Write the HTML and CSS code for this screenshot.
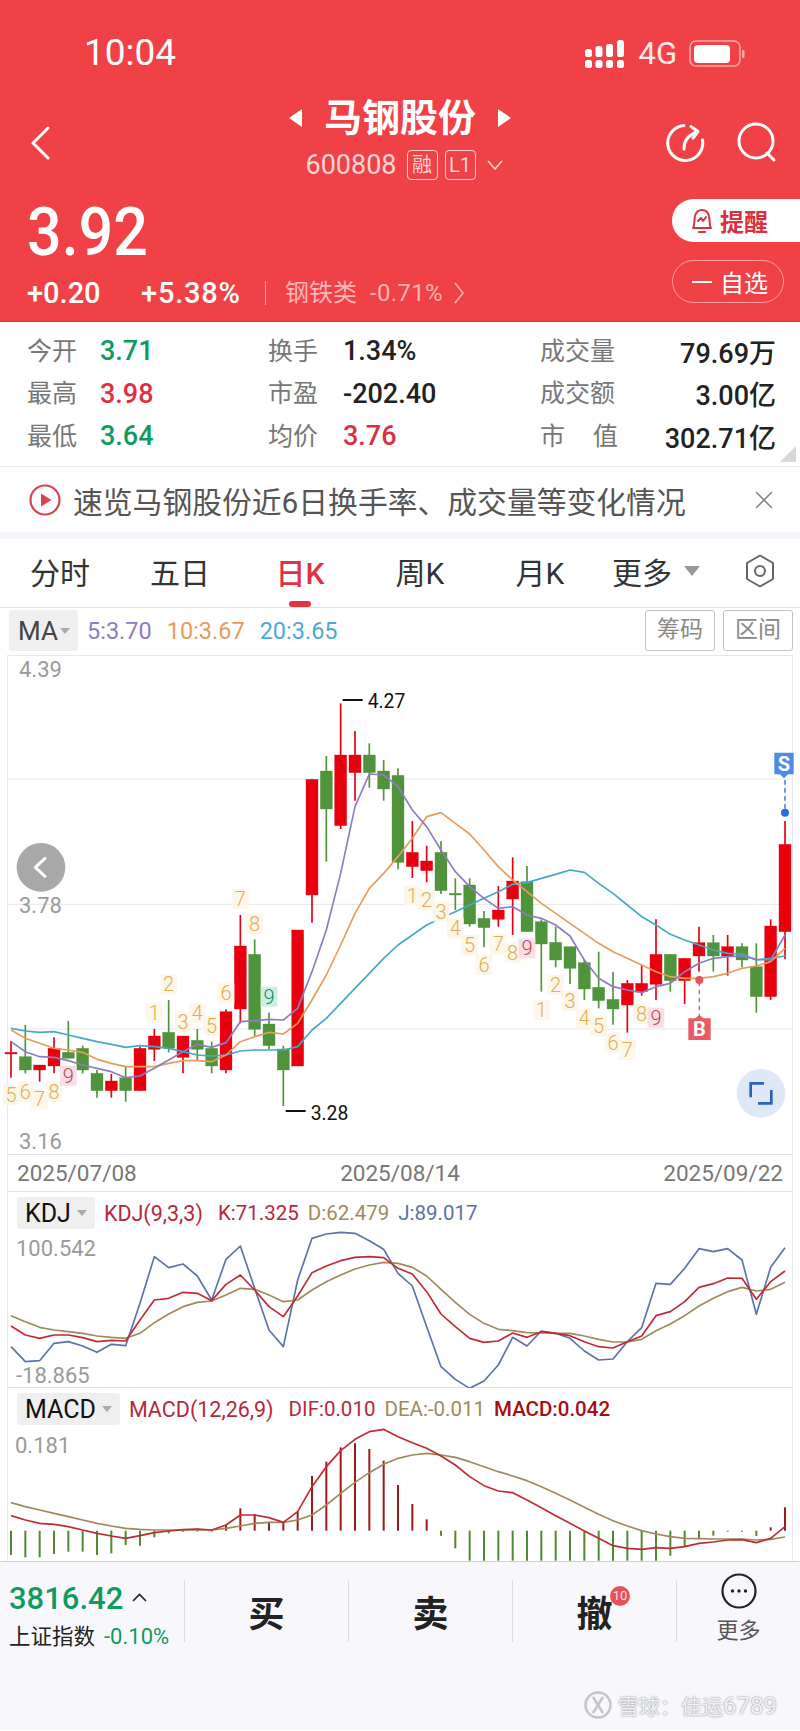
FILE: index.html
```
<!DOCTYPE html>
<html lang="zh-CN">
<head>
    <meta charset="UTF-8">
    <meta name="viewport" content="width=device-width, initial-scale=1.0">
    <title>马钢股份 600808</title>
    <link rel="stylesheet" href="styles.css">
</head>
<body>
    <!-- Red quote header -->
    <header class="header">
        <div class="status-bar">
            <span class="time">10:04</span>
            <div class="status-icons">
                <svg class="signal" width="40" height="29" viewBox="0 0 40 29">
                    <rect x="0" y="9" width="7" height="8" rx="2.5"/><rect x="10.500" y="6" width="7" height="11" rx="2.500"/><rect x="21" y="4" width="7" height="13" rx="2.500"/><rect x="32" y="0" width="7" height="17" rx="2.500"/>
                    <rect x="0" y="20" width="7" height="8" rx="2.500"/><rect x="10.500" y="20" width="7" height="8" rx="2.500"/><rect x="21" y="20" width="7" height="8" rx="2.500"/><rect x="32" y="20" width="7" height="8" rx="2.500"/>
                </svg>
                <span class="net">4G</span>
                <svg class="battery" width="56" height="28" viewBox="0 0 56 28">
                    <rect x="1" y="1" width="50" height="25" rx="6" fill="none" stroke="#f9a9ab" stroke-width="1.5"/>
                    <rect x="5" y="5" width="36" height="18" rx="4" fill="#fff"/>
                    <rect x="53" y="10" width="2.500" height="8" rx="1" fill="#f9a9ab"/>
                </svg>
            </div>
        </div>

        <nav class="nav">
            <svg class="back" width="20" height="34" viewBox="0 0 20 34"><path d="M18 2 L3 17 L18 32" fill="none" stroke="#fff" stroke-width="3" stroke-linecap="round" stroke-linejoin="round"/></svg>
            <div class="stock-title">
                <div class="stock-name">
                    <span class="tri-left"></span>
                    <h1>马钢股份</h1>
                    <span class="tri-right"></span>
                </div>
                <div class="stock-code">
                    <span class="code-num">600808</span>
                    <span class="code-tag">融</span>
                    <span class="code-tag">L1</span>
                    <svg width="16" height="11" viewBox="0 0 16 11"><path d="M1 1 L8 9 L15 1" fill="none" stroke="#fbd5d5" stroke-width="1.800"/></svg>
                </div>
            </div>
            <div class="nav-icons">
                <svg width="40" height="40" viewBox="0 0 40 40" fill="none" stroke="#fff" stroke-width="3" stroke-linecap="round" stroke-linejoin="round">
                    <path d="M19 2.500 A 17.500 17.500 0 1 0 37.500 17"/>
                    <path d="M19 26 C19 18 23 12 32 9"/>
                    <path d="M26 3.500 L33 8.500 L28 15"/>
                </svg>
                <svg width="42" height="42" viewBox="0 0 42 42" fill="none" stroke="#fff" stroke-width="3" stroke-linecap="round">
                    <circle cx="19" cy="19" r="17"/>
                    <path d="M30 31 L37 38"/>
                </svg>
            </div>
        </nav>

        <div class="quote">
            <div class="quote-left">
                <div class="price">3.92</div>
                <div class="change">
                    <span class="change-abs">+0.20</span>
                    <span class="change-pct">+5.38%</span>
                    <span class="sector">钢铁类<em>-0.71%</em></span>
                    <svg width="12" height="22" viewBox="0 0 12 22"><path d="M2 1 L10 11 L2 21" fill="none" stroke="#f9b5b7" stroke-width="1.500"/></svg>
                </div>
            </div>
            <div class="quote-actions">
                <div class="btn-remind">
                    <svg width="24" height="28" viewBox="0 0 24 28" fill="none" stroke="#d9303c" stroke-width="2" stroke-linejoin="round" stroke-linecap="round">
                        <path d="M3 21 C5 18 4 12 5 9 C6 5 9 3 12 3 C15 3 18 5 19 9 C20 12 19 18 21 21 Z"/>
                        <path d="M9 25 H15"/>
                        <path d="M8 14 L11 11 L13 14 L16 10"/>
                    </svg>
                    <span>提醒</span>
                </div>
                <div class="btn-watch"><i></i><span>自选</span></div>
            </div>
        </div>
    </header>

    <!-- Stat grid -->
    <section class="stats">
        <div class="stat col-a"><span class="lbl">今开</span><span class="val green">3.71</span></div>
        <div class="stat col-b"><span class="lbl">换手</span><span class="val">1.34%</span></div>
        <div class="stat col-c"><span class="lbl">成交量</span><span class="val">79.69万</span></div>
        <div class="stat col-a"><span class="lbl">最高</span><span class="val red">3.98</span></div>
        <div class="stat col-b"><span class="lbl">市盈</span><span class="val">-202.40</span></div>
        <div class="stat col-c"><span class="lbl">成交额</span><span class="val">3.00亿</span></div>
        <div class="stat col-a"><span class="lbl">最低</span><span class="val green">3.64</span></div>
        <div class="stat col-b"><span class="lbl">均价</span><span class="val red">3.76</span></div>
        <div class="stat col-c"><span class="lbl lbl-wide">市 值</span><span class="val">302.71亿</span></div>
        <span class="stats-corner"></span>
    </section>

    <section class="banner">
        <svg width="32" height="32" viewBox="0 0 32 32">
            <circle cx="16" cy="16" r="14.500" fill="none" stroke="#d9434d" stroke-width="2.200"/>
            <path d="M12 9.500 L22.500 16 L12 22.500 Z" fill="#d9434d"/>
        </svg>
        <p>速览马钢股份近6日换手率、成交量等变化情况</p>
        <svg class="banner-close" width="20" height="20" viewBox="0 0 20 20"><path d="M2 2 L18 18 M18 2 L2 18" stroke="#8a8a8a" stroke-width="1.600"/></svg>
    </section>

    <!-- Period tabs -->
    <div class="tabs">
        <span class="tab">分时</span>
        <span class="tab">五日</span>
        <span class="tab active">日K</span>
        <span class="tab">周K</span>
        <span class="tab">月K</span>
        <span class="tab tab-more">更多<i class="caret caret-big"></i></span>
        <span class="tab">
            <svg width="30" height="34" viewBox="0 0 30 34" fill="none" stroke="#666" stroke-width="2"><path d="M15 1.500 L28 9 V25 L15 32.500 L2 25 V9 Z" stroke-linejoin="round"/><circle cx="15" cy="17" r="5"/></svg>
        </span>
    </div>

    <div class="ma-row">
        <span class="chip chip-ma">MA<i class="caret"></i></span>
        <span class="ma-val ma5">5:3.70</span>
        <span class="ma-val ma10">10:3.67</span>
        <span class="ma-val ma20">20:3.65</span>
        <span class="ma-btn">筹码</span>
        <span class="ma-btn">区间</span>
    </div>

    <!-- Charts, drawn by chart.js -->
    <div class="charts">
        <div class="price-pane">
            <svg id="klineChart" viewBox="24 18 2352 1494" width="784" height="498"></svg>
        </div>
        <div class="date-row">
            <span>2025/07/08</span>
            <span>2025/08/14</span>
            <span>2025/09/22</span>
        </div>
        <div class="sub-pane kdj-pane">
            <svg id="kdjChart" class="sub-svg" viewBox="24 66 2352 588" width="784" height="196"></svg>
            <div class="legend">
                <span class="chip chip-sub">KDJ<i class="caret"></i></span>
                <span class="legend-title c-red">KDJ(9,3,3)</span>
                <span class="c-red">K:71.325</span>
                <span class="c-brown">D:62.479</span>
                <span class="c-blue">J:89.017</span>
            </div>
            <span class="axis axis-kdj-top">100.542</span>
            <span class="axis axis-kdj-low">-18.865</span>
        </div>
        <div class="sub-pane macd-pane">
            <svg id="macdChart" class="sub-svg" viewBox="24 654 2352 519" width="784" height="173"></svg>
            <div class="legend">
                <span class="chip chip-sub">MACD<i class="caret"></i></span>
                <span class="legend-title c-red">MACD(12,26,9)</span>
                <span class="c-red">DIF:0.010</span>
                <span class="c-brown">DEA:-0.011</span>
                <span class="c-dark">MACD:0.042</span>
            </div>
            <span class="axis axis-macd-top">0.181</span>
        </div>
    </div>

    <!-- Bottom actions -->
    <footer class="footer">
        <div class="actions">
            <div class="index-box">
                <div class="index-value">3816.42<svg width="15" height="9" viewBox="0 0 15 9"><path d="M1 8 L7.500 1.500 L14 8" fill="none" stroke="#222" stroke-width="1.600"/></svg></div>
                <div class="index-name">上证指数<span>-0.10%</span></div>
            </div>
            <div class="act">买</div>
            <div class="act">卖</div>
            <div class="act">撤<b class="act-badge">10</b></div>
            <div class="act-more">
                <svg width="36" height="36" viewBox="0 0 36 36"><circle cx="18" cy="18" r="16.500" fill="none" stroke="#222" stroke-width="2.200"/><circle cx="11.500" cy="18" r="1.700" fill="#222"/><circle cx="18" cy="18" r="1.700" fill="#222"/><circle cx="24.500" cy="18" r="1.700" fill="#222"/></svg>
                <span>更多</span>
            </div>
        </div>
        <div class="watermark">
            <svg width="30" height="30" viewBox="0 0 30 30" fill="none" stroke="#c4c4ca" stroke-width="2.500"><circle cx="15" cy="15" r="12.500"/><path d="M10 7 L20 23 M20 7 L10 23"/></svg>
            <span class="wm-name">雪球：</span>
            <span class="wm-name">佳运<b>6789</b></span>
        </div>
    </footer>

    <script src="chart.js"></script>
</body>
</html>
```

FILE: styles.css
```
* { box-sizing: border-box; }
body {
    margin: 0;
    width: 800px;
    height: 1731px;
    overflow: hidden;
    background-color: #fff;
    color: #222;
    font-family: Roboto, "Noto Sans CJK SC", sans-serif;
}
h1, p { margin: 0; }
i, em { font-style: normal; }

/* header */
.header {
    height: 322px;
    background-color: #f04146;
    border-bottom: 1px solid #d23c40;
    color: #fff;
}
.status-bar {
    height: 92px;
    padding: 14px 55px 0 84px;
    display: flex;
    justify-content: space-between;
    align-items: center;
}
.time { font-size: 37px; line-height: 40px; }
.status-icons { display: flex; align-items: center; margin-top: 2px; }
.signal { fill: #fff; }
.net { font-size: 31px; line-height: 34px; margin: 0 12px 0 13px; color: #fde9e9; }

.nav {
    display: grid;
    grid-template-columns: 1fr auto 1fr;
    align-items: center;
    padding: 5px 30px 0 30px;
    height: 89px;
}
.back { margin-top: 8px; }
.stock-title { display: flex; flex-direction: column; align-items: center; }
.stock-name { display: flex; align-items: center; height: 40px; gap: 22px; }
.stock-name h1 { font-size: 38px; line-height: 40px; font-weight: 700; }
.tri-left, .tri-right { width: 0; height: 0; border-top: 9px solid transparent; border-bottom: 9px solid transparent; }
.tri-left { border-right: 13px solid #fff; }
.tri-right { border-left: 13px solid #fff; }
.stock-code {
    display: flex;
    align-items: center;
    height: 30px;
    margin-top: 12px;
    margin-left: 8px;
    gap: 7px;
    font-size: 27px;
    color: #fbd5d5;
}
.code-num { margin-right: 3px; }
.stock-code svg { margin-left: 4px; }
.code-tag {
    width: 31px;
    height: 30px;
    border: 1px solid #fbd5d5;
    border-radius: 4px;
    font-size: 20px;
    line-height: 28px;
    text-align: center;
}
.nav-icons { justify-self: end; display: flex; gap: 32px; align-items: center; margin: 8px -9px 0 0; }

.quote { display: flex; justify-content: space-between; padding: 18px 0 0 27px; }
.price {
    font-size: 61px;
    line-height: 66px;
    font-weight: 500;
    transform: scaleY(1.1);
    transform-origin: left center;
}
.change { display: flex; align-items: center; height: 30px; margin-top: 13px; }
.change-abs { font-size: 29px; font-weight: 500; width: 114px; }
.change-pct { font-size: 29px; font-weight: 500; width: 124px; letter-spacing: 0.8px; }
.sector {
    border-left: 1px solid #f8a0a3;
    padding-left: 19px;
    font-size: 24px;
    line-height: 24px;
    color: #f9b5b7;
    margin-right: 10px;
}
.sector em { margin-left: 13px; letter-spacing: 0.3px; }
.quote-actions { display: flex; flex-direction: column; align-items: flex-start; gap: 18px; width: 128px; }
.btn-remind {
    width: 128px;
    height: 43px;
    padding-left: 18px;
    display: flex;
    align-items: center;
    gap: 6px;
    background-color: #fff;
    border-radius: 22px 0 0 22px;
    color: #d9303c;
    font-size: 24px;
    font-weight: 700;
}
.btn-watch {
    width: 112px;
    height: 43px;
    display: flex;
    align-items: center;
    padding-left: 19px;
    gap: 8px;
    border: 1.5px solid #f8a0a3;
    border-radius: 22px;
    font-size: 24px;
}
.btn-watch i { width: 20px; height: 2px; background-color: #fff; }

/* stats */
.stats {
    position: relative;
    height: 145px;
    padding: 7px 24px 0 27px;
    display: grid;
    grid-template-columns: 241px 272px 1fr;
    grid-auto-rows: 42.5px;
    border-bottom: 1.5px solid #e9e9ec;
}
.stat { display: flex; align-items: center; }
.lbl { font-size: 25px; color: #777; margin-top: -3px; }
.val { font-size: 27px; font-weight: 500; margin-top: 2px; }
.col-a .lbl { width: 73px; }
.col-b .lbl { width: 75px; }
.col-c { justify-content: space-between; }
.lbl-wide { width: 78px; text-align: justify; text-align-last: justify; }
.green { color: #0e9a61; }
.red { color: #dd2f3f; }
.stats-corner {
    position: absolute;
    right: 4px;
    bottom: 4px;
    width: 0;
    height: 0;
    border-left: 16px solid transparent;
    border-bottom: 16px solid #d8d8d8;
}

/* banner */
.banner {
    height: 65px;
    padding: 0 26px 0 29px;
    display: flex;
    align-items: center;
    border-bottom: 7px solid #f5f6f9;
    box-sizing: content-box;
}
.banner p { font-size: 29.8px; color: #555; margin-left: 12px; white-space: nowrap; }
.banner-close { margin-left: auto; }

/* tabs */
.tabs {
    height: 69px;
    display: grid;
    grid-template-columns: repeat(6, 120px) 80px;
    align-items: center;
    border-bottom: 1.5px solid #e3e3e3;
}
.tab {
    position: relative;
    height: 100%;
    padding-bottom: 4px;
    display: flex;
    align-items: center;
    justify-content: center;
    font-size: 30px;
    color: #333;
}
.tab.active { color: #e0333f; font-weight: 500; }
.tab.active::after {
    content: "";
    position: absolute;
    bottom: 0;
    left: 49px;
    width: 22px;
    height: 6px;
    border-radius: 3px;
    background-color: #e0333f;
}
.tab-more { margin-left: -8px; }
.caret {
    display: inline-block;
    width: 0;
    height: 0;
    border-left: 5px solid transparent;
    border-right: 5px solid transparent;
    border-top: 6px solid #aaa;
}
.caret-big {
    margin-left: 12px;
    border-left-width: 8px;
    border-right-width: 8px;
    border-top: 10px solid #999;
}

/* ma row */
.ma-row {
    height: 47px;
    padding: 2px 7px 0 9px;
    display: flex;
    align-items: flex-start;
}
.chip {
    display: flex;
    align-items: center;
    background-color: #efefef;
    border-radius: 3px;
    color: #222;
}
.chip-ma { width: 69px; height: 41px; padding-left: 9px; font-size: 26px; color: #444; gap: 2px; }
.ma-val { font-size: 23.5px; line-height: 43px; }
.ma5 { margin-left: 9px; color: #8e7cc3; }
.ma10 { margin-left: 15px; color: #e89c5c; }
.ma20 { margin-left: 15px; color: #4fa8d8; margin-right: auto; }
.ma-btn {
    width: 70px;
    height: 41px;
    margin-left: 8px;
    border: 1.5px solid #c4c4c4;
    border-radius: 3px;
    font-size: 23px;
    line-height: 38px;
    text-align: center;
    color: #888;
}

/* charts */
.charts {
    margin: 0 7px;
    width: 786px;
    border-left: 1px solid #e8e8e8;
    border-right: 1px solid #e8e8e8;
}
.price-pane { height: 499px; border-top: 1px solid #e8e8e8; }
.price-pane svg { display: block; overflow: visible; }
.date-row {
    height: 38px;
    padding: 0 9px 0 9px;
    display: flex;
    justify-content: space-between;
    align-items: center;
    border-top: 1.5px solid #e3e3e3;
    border-bottom: 1.5px solid #e3e3e3;
    font-size: 22.5px;
    color: #777;
}
.sub-pane { position: relative; }
.kdj-pane { height: 196px; border-bottom: 1.5px solid #e3e3e3; }
.macd-pane { height: 173px; }
.sub-svg { position: absolute; left: 0; top: 0; display: block; }
.legend {
    position: relative;
    display: flex;
    align-items: center;
    gap: 9px;
    padding: 5px 0 0 9px;
    font-size: 20.5px;
}
.legend-title { font-size: 21.5px; margin-right: 6px; }
.chip-sub { height: 32px; padding: 0 8px; font-size: 25px; gap: 6px; color: #111; }
.c-red { color: #b5283a; }
.c-brown { color: #a08a5c; }
.c-blue { color: #5d70a8; }
.c-dark { color: #a80c14; font-weight: 500; }
.axis { position: absolute; left: 8px; font-size: 22px; line-height: 26px; color: #9a9a9a; }
.axis-kdj-top { top: 44px; }
.axis-kdj-low { top: 171px; }
.axis-macd-top { top: 45px; left: 7px; }

/* svg parts, units are 1/3 px */
.grid-line { stroke: #e6e6e6; stroke-width: 3; }
.wick { stroke-width: 5; }
.up { fill: #e8000f; stroke: #e8000f; }
.down { fill: #4f943a; stroke: #4f943a; }
.line { fill: none; stroke-width: 5; stroke-linejoin: round; }
.ma5-line { stroke: #8e7cc3; }
.ma10-line { stroke: #e89c5c; }
.ma20-line { stroke: #42a9c9; }
.k-line { stroke: #c22a33; }
.d-line { stroke: #a08a5c; }
.j-line { stroke: #5a72ae; }
.bar-up { stroke: #9c1a1a; stroke-width: 6; }
.bar-down { stroke: #4f8a2f; stroke-width: 6; }
.price-label { font-size: 66px; fill: #9a9a9a; font-family: Roboto, sans-serif; }
.extreme-label { font-size: 58px; fill: #111; font-family: Roboto, sans-serif; }
.extreme-tick { stroke: #111; stroke-width: 6; }
.td-box-plain { fill: #fdf6ea; }
.td-box-sell { fill: #fbdfe2; }
.td-box-buy { fill: #cfeee0; }
.td-num { font-size: 60px; font-weight: 300; text-anchor: middle; dominant-baseline: central; font-family: Roboto, sans-serif; }
.td-plain { fill: #e7ac4f; }
.td-sell { fill: #bd3f56; }
.td-buy { fill: #0a8f5c; }
.pin-s { fill: #4d8be8; }
.pin-b { fill: #ec5865; }
.pin-text { font-size: 60px; font-weight: 700; fill: #fff; text-anchor: middle; dominant-baseline: central; font-family: Roboto, sans-serif; }
.pin-stem { stroke-width: 4; stroke-dasharray: 14 10; }
.round-btn-left { fill: #a8a8a8; }
.round-btn-expand { fill: #dfe8f6; }

/* footer */
.footer {
    position: relative;
    height: 169px;
    background-color: #f8f8fc;
    border-top: 1.5px solid #cfcfcf;
    padding-top: 18px;
}
.actions {
    display: grid;
    grid-template-columns: 185px 164px 164px 164px 123px;
    height: 62px;
}
.act, .act-more, .index-box { height: 62px; }
.act, .index-box { border-right: 1px solid #dcdcdc; }
.index-box { padding-left: 9px; white-space: nowrap; }
.index-value {
    margin-top: 2px;
    font-size: 31px;
    line-height: 34px;
    font-weight: 500;
    color: #0e9a61;
    display: flex;
    align-items: center;
}
.index-value svg { margin-left: 9px; margin-top: -4px; }
.index-name { margin-top: 6px; font-size: 21.5px; line-height: 30px; color: #222; }
.index-name span { margin-left: 9px; color: #0e9a61; font-size: 22px; }
.act {
    position: relative;
    display: flex;
    align-items: center;
    justify-content: center;
    font-size: 36px;
    font-weight: 700;
}
.act-badge {
    position: absolute;
    left: 97px;
    top: 6px;
    width: 20px;
    height: 20px;
    border-radius: 50%;
    background-color: #e8505b;
    color: #fde3e3;
    font-size: 13px;
    font-weight: 400;
    line-height: 20px;
    text-align: center;
}
.act-more { display: flex; flex-direction: column; align-items: center; margin-top: -7px; color: #555; font-size: 22px; }
.act-more svg { flex: none; }
.act-more span { margin-top: 7px; line-height: 30px; }
.watermark {
    position: absolute;
    right: 23px;
    bottom: 10px;
    display: flex;
    align-items: center;
    font-size: 21px;
    color: #f1f1f4;
    text-shadow: 0 0 2px #77777d;
}
.watermark svg { margin-right: 5px; }
.wm-name b { font-size: 24px; font-weight: 400; }
```

FILE: chart.js
```
// all coordinates are in 1/3 px, the viewBox of each svg scales them down
const step = 43;
const x0 = 33;
const xAt = i => x0 + i * step;

// [up?, wickTop, bodyTop, bodyBottom, wickBottom]
const candles = [
    [1, 1173, 1207, 1212, 1283], [0, 1125, 1220, 1260, 1270], [1, 1245, 1245, 1260, 1295], [1, 1162, 1195, 1248, 1270],
    [0, 1113, 1207, 1225, 1225], [0, 1187, 1195, 1260, 1270], [0, 1260, 1270, 1322, 1343], [1, 1272, 1293, 1322, 1343],
    [0, 1250, 1283, 1322, 1355], [1, 1190, 1195, 1322, 1322], [1, 1137, 1158, 1198, 1233], [0, 1050, 1147, 1195, 1207],
    [1, 1158, 1158, 1222, 1270], [0, 1137, 1171, 1198, 1230], [0, 1175, 1195, 1248, 1270], [1, 1078, 1085, 1260, 1270],
    [1, 795, 888, 1077, 1120], [0, 868, 913, 1138, 1158], [0, 1088, 1122, 1187, 1197], [0, 1187, 1197, 1260, 1368],
    [1, 840, 840, 1248, 1248], [1, 388, 388, 735, 818], [0, 318, 363, 477, 635], [1, 160, 315, 527, 537],
    [1, 243, 315, 368, 452], [0, 280, 315, 368, 413], [0, 330, 363, 417, 452], [0, 355, 376, 637, 658],
    [1, 513, 607, 650, 684], [1, 587, 633, 662, 697], [0, 574, 607, 722, 732], [0, 685, 730, 735, 780],
    [0, 685, 705, 822, 830], [0, 783, 805, 833, 892], [1, 708, 780, 808, 830], [1, 622, 693, 747, 855],
    [0, 648, 695, 845, 845], [0, 808, 815, 882, 1025], [0, 830, 877, 930, 952], [0, 890, 890, 955, 1002],
    [0, 930, 938, 1017, 1050], [0, 905, 1012, 1052, 1075], [0, 966, 1048, 1077, 1124], [1, 990, 1000, 1065, 1148],
    [1, 945, 1000, 1025, 1037], [1, 808, 913, 1003, 1050], [0, 913, 913, 992, 1025], [1, 925, 925, 992, 1062],
    [1, 830, 878, 918, 965], [0, 855, 878, 918, 965], [1, 855, 890, 918, 977], [0, 880, 890, 930, 952],
    [0, 880, 950, 1040, 1088], [1, 808, 828, 1040, 1050], [1, 513, 583, 845, 928]
];

const ma5 = [1175, 1205, 1220, 1222, 1232, 1245, 1255, 1265, 1283, 1278, 1255, 1230, 1205, 1183, 1192, 1178, 1115, 1112, 1108, 1110, 1075, 965, 840, 670, 470, 372, 375, 410,
    480, 530, 600, 665, 710, 745, 775, 770, 795, 805, 825, 858, 930, 985, 1010, 1020, 1028, 1010, 1000, 965, 940, 925, 920, 918, 928, 930, 855];
const ma10 = [1140, 1165, 1180, 1195, 1200, 1207, 1228, 1240, 1250, 1250, 1250, 1240, 1232, 1232, 1235, 1215, 1175, 1160, 1147, 1152, 1120, 1050, 975, 885, 790, 715, 670, 620,
    565, 500, 488, 520, 552, 600, 650, 690, 725, 760, 790, 820, 850, 880, 905, 925, 945, 965, 980, 985, 985, 980, 970, 955, 948, 935, 895];
const ma20 = [1135, 1143, 1147, 1145, 1155, 1165, 1175, 1183, 1192, 1187, 1190, 1195, 1205, 1215, 1218, 1215, 1203, 1200, 1200, 1200, 1190, 1140, 1105, 1060, 1015, 970, 925, 885,
    855, 825, 805, 785, 765, 745, 725, 703, 698, 685, 673, 660, 667, 700, 730, 765, 800, 825, 853, 870, 885, 900, 910, 912, 930, 925, 918];

const kLine = [468, 495, 505, 495, 495, 503, 515, 511, 513, 450, 390, 385, 367, 370, 392, 343, 315, 360, 410, 440, 378, 308, 288, 272, 262, 260, 263, 295,
    312, 365, 432, 470, 505, 517, 513, 489, 502, 485, 490, 497, 515, 530, 534, 515, 498, 437, 425, 395, 352, 341, 324, 325, 388, 335, 303];
const dLine = [437, 455, 472, 480, 485, 490, 498, 502, 505, 490, 458, 432, 410, 397, 393, 375, 355, 358, 375, 395, 390, 360, 335, 315, 297, 285, 277, 280,
    292, 318, 358, 397, 433, 460, 478, 482, 488, 489, 490, 490, 498, 508, 516, 516, 508, 482, 462, 437, 408, 385, 365, 352, 363, 358, 337];
const jLine = [530, 575, 572, 520, 515, 528, 547, 523, 527, 400, 260, 293, 282, 318, 390, 268, 228, 355, 480, 530, 330, 205, 192, 187, 190, 212, 238, 310,
    348, 470, 590, 628, 655, 633, 585, 502, 528, 483, 490, 505, 543, 570, 567, 515, 473, 340, 343, 295, 236, 245, 236, 270, 433, 292, 233];

const dif = [1037, 1050, 1060, 1063, 1070, 1080, 1090, 1098, 1105, 1097, 1088, 1083, 1079, 1077, 1080, 1065, 1035, 1035, 1043, 1057, 1025, 950, 890, 842, 808, 785, 778, 800,
    818, 835, 858, 885, 920, 947, 963, 968, 990, 1013, 1037, 1060, 1083, 1105, 1127, 1135, 1138, 1133, 1135, 1130, 1120, 1116, 1110, 1109, 1118, 1105, 1070];
const dea = [998, 1010, 1020, 1030, 1040, 1050, 1060, 1068, 1075, 1078, 1080, 1080, 1080, 1079, 1080, 1075, 1068, 1060, 1057, 1057, 1050, 1035, 1005, 970, 937, 908, 883, 865,
    855, 850, 855, 862, 875, 890, 905, 918, 932, 950, 970, 990, 1012, 1033, 1052, 1068, 1082, 1092, 1100, 1105, 1106, 1107, 1107, 1107, 1110, 1108, 1101];
const bars = [1155, 1162, 1162, 1152, 1145, 1145, 1155, 1150, 1125, 1127, 1102, 1090, 1085, 1085, 1085, 1065, 1015, 1032, 1055, 1058, 1025, 918, 875, 832, 820, 837, 872, 945,
    1002, 1048, 1097, 1135, 1172, 1172, 1172, 1172, 1172, 1172, 1172, 1172, 1172, 1172, 1172, 1172, 1172, 1172, 1157, 1130, 1108, 1097, 1085, 1085, 1098, 1072, 1012];
const macdBase = 1082;

// [candle index, digit, y, kind]
const tdMarks = [
    [0, 5, 1335, 'plain'], [1, 6, 1325, 'plain'], [2, 7, 1348, 'plain'], [3, 8, 1325, 'plain'], [4, 9, 1277, 'sell'],
    [10, 1, 1090, 'plain'], [11, 2, 1003, 'plain'], [12, 3, 1115, 'plain'], [13, 4, 1090, 'plain'], [14, 5, 1127, 'plain'],
    [15, 6, 1030, 'plain'], [16, 7, 747, 'plain'], [17, 8, 822, 'plain'], [18, 9, 1040, 'buy'],
    [28, 1, 737, 'plain'], [29, 2, 750, 'plain'], [30, 3, 785, 'plain'], [31, 4, 835, 'plain'], [32, 5, 885, 'plain'],
    [33, 6, 945, 'plain'], [34, 7, 883, 'plain'], [35, 8, 908, 'plain'], [36, 9, 895, 'sell'],
    [37, 1, 1080, 'plain'], [38, 2, 1005, 'plain'], [39, 3, 1053, 'plain'], [40, 4, 1105, 'plain'], [41, 5, 1127, 'plain'],
    [42, 6, 1178, 'plain'], [43, 7, 1200, 'plain'], [44, 8, 1092, 'plain'], [45, 9, 1103, 'sell']
];

function polyline(values, cls) {
    const pts = values.map((y, i) => `${xAt(i)},${y}`).join(' ');
    return `<polyline class="line ${cls}" points="${pts}"/>`;
}

function drawKline() {
    let out = '';
    [387, 763, 1137].forEach(y => {
        out += `<line class="grid-line" x1="24" x2="2376" y1="${y}" y2="${y}"/>`;
    });
    out += `<text class="price-label" x="57" y="80">4.39</text>`;
    out += `<text class="price-label" x="57" y="790">3.78</text>`;
    out += `<text class="price-label" x="57" y="1498">3.16</text>`;

    candles.forEach((c, i) => {
        const cls = c[0] ? 'up' : 'down';
        const x = xAt(i);
        out += `<line class="wick ${cls}" x1="${x}" x2="${x}" y1="${c[1]}" y2="${c[4]}"/>`;
        out += `<rect class="${cls}" x="${x - 18}" y="${c[2]}" width="36" height="${c[3] - c[2]}" stroke="none"/>`;
    });

    out += polyline(ma20, 'ma20-line') + polyline(ma10, 'ma10-line') + polyline(ma5, 'ma5-line');

    tdMarks.forEach(m => {
        const x = xAt(m[0]);
        out += `<rect class="td-box-${m[3]}" x="${x - 25}" y="${m[2] - 30}" width="50" height="60"/>`;
        out += `<text class="td-num td-${m[3]}" x="${x}" y="${m[2]}">${m[1]}</text>`;
    });

    // highest and lowest labels
    out += `<line class="extreme-tick" x1="1028" x2="1088" y1="150" y2="150"/><text class="extreme-label" x="1103" y="174">4.27</text>`;
    out += `<line class="extreme-tick" x1="857" x2="917" y1="1383" y2="1383"/><text class="extreme-label" x="932" y="1410">3.28</text>`;

    // S pin
    const sx = xAt(54);
    out += `<line class="pin-stem" stroke="#2b6fd6" x1="${sx}" x2="${sx}" y1="390" y2="480"/>`;
    out += `<circle cx="${sx}" cy="488" r="12" fill="#2b6fd6"/>`;
    out += `<path class="pin-s" d="M2323 308 H2381 V373 H2364 L2352 385 L2340 373 H2323 Z"/>`;
    out += `<text class="pin-text" x="2352" y="342">S</text>`;

    // B pin
    out += `<line class="pin-stem" stroke="#e8505b" x1="2098" x2="2098" y1="995" y2="1095"/>`;
    out += `<circle cx="2098" cy="990" r="12" fill="#e8505b"/>`;
    out += `<path class="pin-b" d="M2065 1105 H2086 L2098 1094 L2110 1105 H2132 V1170 H2065 Z"/>`;
    out += `<text class="pin-text" x="2098" y="1138">B</text>`;

    // round buttons
    out += `<circle class="round-btn-left" cx="123" cy="652" r="73"/>`;
    out += `<path d="M135 625 L106 652 L135 679" fill="none" stroke="#fff" stroke-width="9" stroke-linecap="round" stroke-linejoin="round"/>`;
    out += `<circle class="round-btn-expand" cx="2283" cy="1330" r="73"/>`;
    out += `<path d="M2252 1342 V1300 H2292 M2314 1320 V1360 H2274" fill="none" stroke="#2a63b8" stroke-width="8"/>`;

    document.getElementById('klineChart').innerHTML = out;
}

function drawKdj() {
    document.getElementById('kdjChart').innerHTML =
        polyline(jLine, 'j-line') + polyline(dLine, 'd-line') + polyline(kLine, 'k-line');
}

function drawMacd() {
    let out = '';
    bars.forEach((y, i) => {
        const cls = y < macdBase ? 'bar-up' : 'bar-down';
        out += `<line class="${cls}" x1="${xAt(i)}" x2="${xAt(i)}" y1="${macdBase}" y2="${y}"/>`;
    });
    out += polyline(dea, 'd-line') + polyline(dif, 'k-line');
    document.getElementById('macdChart').innerHTML = out;
}

drawKline();
drawKdj();
drawMacd();
```
